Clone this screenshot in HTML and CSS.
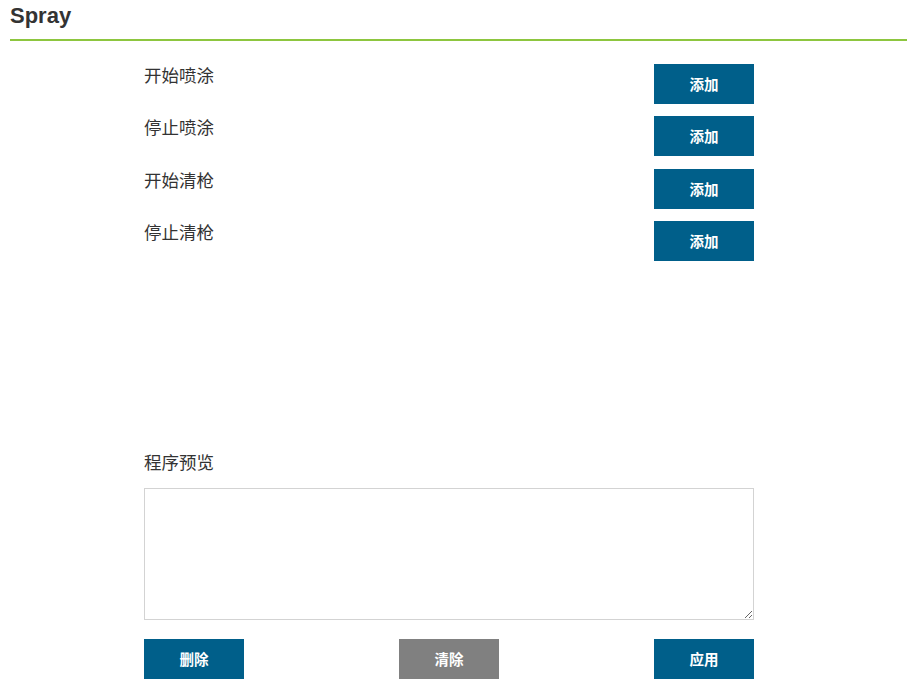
FILE: index.html
```html
<!DOCTYPE html>
<html lang="zh">
<head>
<meta charset="utf-8">
<title>Spray</title>
<link rel="stylesheet" href="styles.css">
</head>
<body>
<header class="header">
  <h1 class="title">Spray</h1>
</header>
<main class="content">
  <div class="rows">
    <div class="row"><span class="label">开始喷涂</span><button class="btn">添加</button></div>
    <div class="row"><span class="label">停止喷涂</span><button class="btn">添加</button></div>
    <div class="row"><span class="label">开始清枪</span><button class="btn">添加</button></div>
    <div class="row"><span class="label">停止清枪</span><button class="btn">添加</button></div>
  </div>
  <div class="preview-label label">程序预览</div>
  <textarea class="preview"></textarea>
  <div class="actions">
    <button class="btn">删除</button>
    <button class="btn btn-gray">清除</button>
    <button class="btn">应用</button>
  </div>
</main>
</body>
</html>
```

FILE: styles.css
```css
* { box-sizing: border-box; }
html, body { margin: 0; padding: 0; background: #fff; }
body {
  font-family: "Liberation Sans", "Noto Sans CJK SC", sans-serif;
  color: #333;
}
.header {
  margin: 0 15px 0 10px;
  height: 41px;
  border-bottom: 2px solid #8dc63f;
}
.title {
  margin: 0;
  padding-top: 3px;
  font-size: 22px;
  line-height: 26px;
  font-weight: bold;
  color: #333;
}
.content {
  margin-left: 144px;
  width: 610px;
  padding-top: 23px;
}
.rows {
  display: flex;
  flex-direction: column;
  gap: 12.33px;
}
.row {
  display: flex;
  justify-content: space-between;
  align-items: flex-start;
  height: 40px;
}
.label {
  font-family: "Noto Sans CJK SC", sans-serif;
  font-size: 17.5px;
  line-height: 22px;
  color: #333;
}
.btn {
  width: 100px;
  height: 40px;
  border: none;
  background: #005f8a;
  color: #fff;
  font-family: "Noto Sans CJK SC", sans-serif;
  font-size: 14.5px;
  font-weight: bold;
  padding: 0 0 1px;
  cursor: pointer;
}
.btn-gray { background: #808080; }
.preview-label {
  margin-top: 190px;
}
.preview {
  display: block;
  margin-top: 15px;
  width: 610px;
  height: 132px;
  border: 1px solid #d3d3d3;
  resize: both;
  outline: none;
}
.actions {
  margin-top: 19px;
  display: flex;
  justify-content: space-between;
}
```
